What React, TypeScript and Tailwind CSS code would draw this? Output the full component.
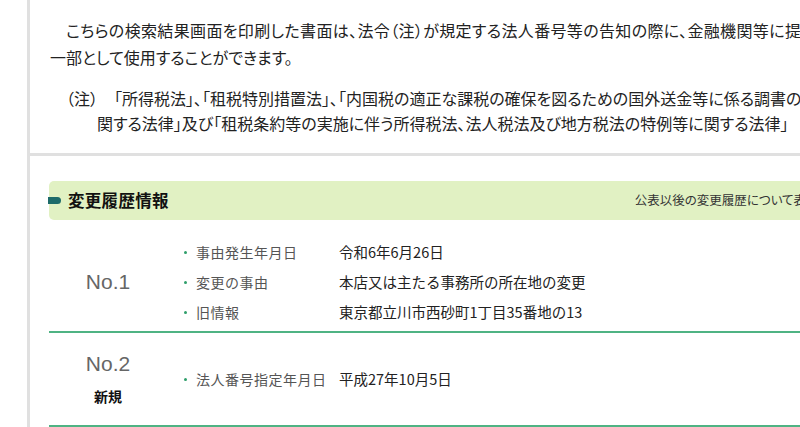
import React from "react";

const items1 = [
  { label: "事由発生年月日", value: "令和6年6月26日" },
  { label: "変更の事由", value: "本店又は主たる事務所の所在地の変更" },
  { label: "旧情報", value: "東京都立川市西砂町1丁目35番地の13" },
];

function Item({ label, value }: { label: string; value: string }) {
  return (
    <li className="flex items-center h-[30px]">
      <span className="w-[3px] h-[3px] rounded-full bg-[#2e9e6a] ml-[17px] mr-[9px]" />
      <span className="w-[143px] text-[14px] text-[#555] tracking-[0.5px]">{label}</span>
      <span className="text-[14.5px] text-[#222]">{value}</span>
    </li>
  );
}

export default function App() {
  return (
    <div className="w-[800px] h-[427px] overflow-hidden bg-white font-['Noto_Sans_CJK_JP',sans-serif]">
      <div className="ml-[27px] w-[1000px] border-l-[3px] border-[#e0e0e0]">
        <div className="pt-[17px] pb-[17px] pl-[20px] border-b-[3px] border-[#e0e0e0] text-[16px] text-[#222] [font-feature-settings:'palt']">
          <p className="leading-[27px] indent-[16px] whitespace-nowrap">
            <span className="tracking-[0.35px]">
              こちらの検索結果画面を印刷した書面は、法令（注）が規定する法人番号等の告知の際に、金融機関等に提出する書類の
            </span>
            <br />
            一部として使用することができます。
          </p>
          <p className="mt-[15px] leading-[25px] pl-[47px] -indent-[31px] whitespace-nowrap">
            （注）　「所得税法」、「租税特別措置法」、「内国税の適正な課税の確保を図るための国外送金等に係る調書の提出等に
            <br />
            関する法律」及び「租税条約等の実施に伴う所得税法、法人税法及び地方税法の特例等に関する法律」
          </p>
        </div>
        <div className="pt-[25px] pl-[19px]">
          <div className="relative flex items-center h-[39px] rounded-[5px] bg-[#e1f1c3] w-[900px]">
            <span className="absolute left-[-1px] top-[16px] w-[13px] h-[7px] rounded-r-full rounded-l-[2px] bg-[#1d6b6a]" />
            <h2 className="ml-[19px] text-[16.5px] font-bold text-[#111] tracking-[0.3px]">変更履歴情報</h2>
            <span className="ml-[466px] text-[12.5px] text-[#333] [font-feature-settings:'palt']">公表以後の変更履歴について表示しています。</span>
          </div>
          <div className="w-[900px]">
            <div className="flex items-center pt-[17px] pb-[4px] border-b-2 border-[#4fb383]">
              <div className="w-[118px] text-center font-['Liberation_Sans',Arial,sans-serif] text-[21px] text-[#666]">No.1</div>
              <ul>
                {items1.map((it) => (
                  <Item key={it.label} {...it} />
                ))}
              </ul>
            </div>
            <div className="flex items-center py-[17px] border-b-2 border-[#4fb383]">
              <div className="w-[118px] flex flex-col items-center">
                <div className="font-['Liberation_Sans',Arial,sans-serif] text-[21px] leading-[28px] text-[#666]">No.2</div>
                <div className="mt-[6px] text-[14px] leading-[24px] font-bold text-[#111]">新規</div>
              </div>
              <ul>
                <Item label="法人番号指定年月日" value="平成27年10月5日" />
              </ul>
            </div>
          </div>
        </div>
      </div>
    </div>
  );
}
